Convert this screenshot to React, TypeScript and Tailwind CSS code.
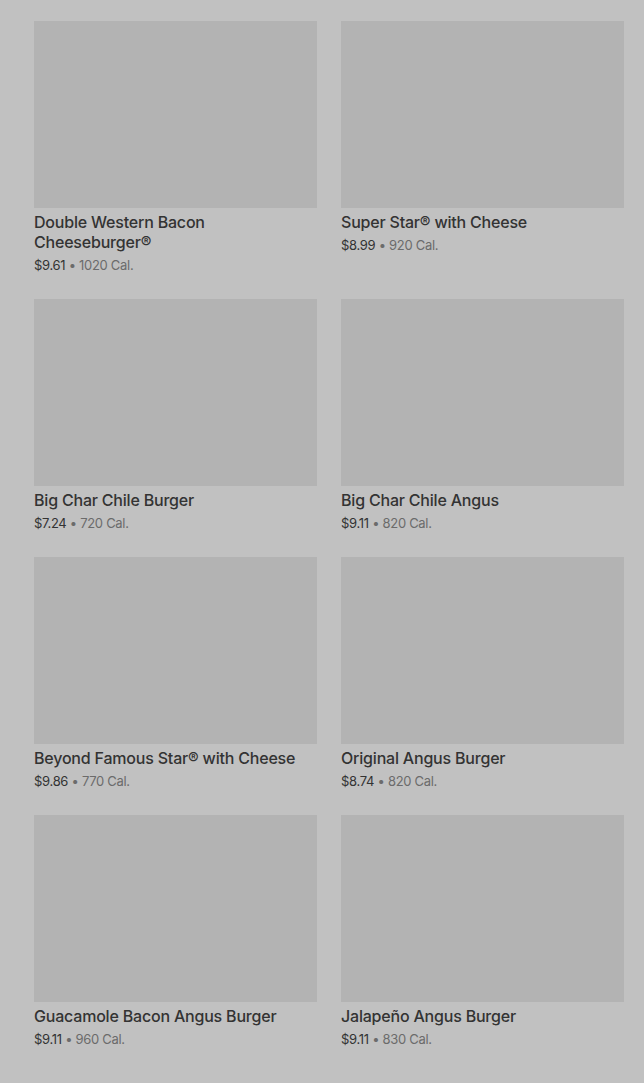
import React from "react";

const items = [
  { name: "Double Western Bacon Cheeseburger®", price: "$9.61", cal: "1020 Cal." },
  { name: "Super Star® with Cheese", price: "$8.99", cal: "920 Cal." },
  { name: "Big Char Chile Burger", price: "$7.24", cal: "720 Cal." },
  { name: "Big Char Chile Angus", price: "$9.11", cal: "820 Cal." },
  { name: "Beyond Famous Star® with Cheese", price: "$9.86", cal: "770 Cal." },
  { name: "Original Angus Burger", price: "$8.74", cal: "820 Cal." },
  { name: "Guacamole Bacon Angus Burger", price: "$9.11", cal: "960 Cal." },
  { name: "Jalapeño Angus Burger", price: "$9.11", cal: "830 Cal." },
];

export default function App() {
  return (
    <div
      className="min-h-[1083px] w-full bg-[#c1c1c1] pl-[34px] pr-[20px] pt-[21px]"
      style={{ fontFamily: "Inter, 'Noto Sans', sans-serif" }}
    >
      <div className="grid grid-cols-2 gap-x-[24px] gap-y-[24px]">
        {items.map((it) => (
          <div key={it.name} className="flex flex-col">
            <div className="h-[187px] w-full bg-[#b3b3b3]" />
            <div className="mt-[4px] text-[16px] leading-[20px] font-medium text-[#333333] tracking-[-0.2px]">
              {it.name.startsWith("Double") ? (
                <>
                  Double Western Bacon
                  <br />
                  Cheeseburger®
                </>
              ) : (
                it.name
              )}
            </div>
            <div className="mt-[3px] text-[13px] leading-[20px] tracking-[-0.3px]">
              <span className="text-[#333333]">{it.price}</span>
              <span className="text-[#6b6b6b]"> • {it.cal}</span>
            </div>
          </div>
        ))}
      </div>
    </div>
  );
}
